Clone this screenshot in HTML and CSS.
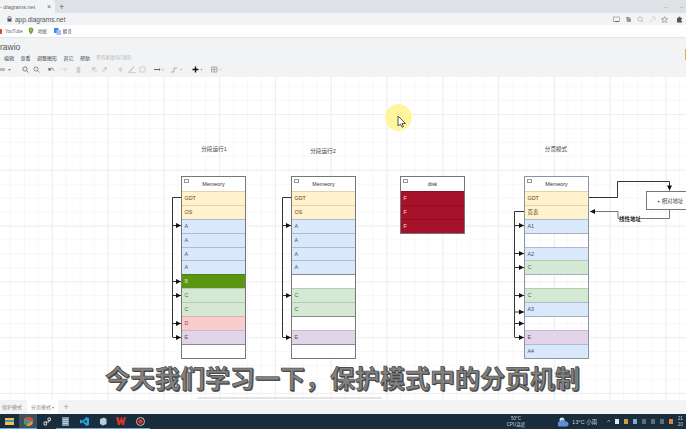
FILE: index.html
```html
<!DOCTYPE html>
<html lang="zh-CN">

<head>
    <meta charset="UTF-8">
    <meta name="viewport" content="width=device-width, initial-scale=1.0">
    <title>Drawio - diagrams.net</title>
    <link rel="stylesheet" href="styles.css">
</head>

<body>
    <div class="screen">
        <div class="tab-strip">
            <div class="browser-tab"><span>- diagrams.net</span><span class="tab-close">×</span></div>
            <span class="tab-new">+</span>
            <div class="window-btns"><span>–</span><span>–</span></div>
        </div>

        <div class="address-bar">
            <svg class="lock" width="5" height="6" viewBox="0 0 5 6"><path d="M1 3V2a1.5 1.5 0 0 1 3 0v1" fill="none" stroke="#555" stroke-width=".7"/><rect x=".5" y="2.6" width="4" height="3" fill="#555"/></svg>
            <span class="url">app.diagrams.net</span>
            <div class="addr-icons">
                <svg width="7" height="7" viewBox="0 0 7 7"><rect x=".5" y="1" width="6" height="4.5" fill="none" stroke="#999" stroke-width=".7"/><path d="M2 5.5h4" stroke="#666"/></svg>
                <svg width="7" height="7" viewBox="0 0 7 7"><path d="M1 1h3l2 2v3H2z" fill="#999"/></svg>
                <svg width="7" height="7" viewBox="0 0 7 7"><circle cx="3" cy="3" r="2.2" fill="none" stroke="#aaa" stroke-width=".7"/><path d="M4.5 4.5 6.5 6.500" stroke="#aaa" stroke-width=".7"/></svg>
                <svg width="7" height="7" viewBox="0 0 7 7"><path d="M1 6 6 1M3 1h3v3" fill="none" stroke="#ccc" stroke-width=".7"/></svg>
                <svg width="7" height="7" viewBox="0 0 7 7"><path d="M3.5.6 4.4 2.6 6.6 2.8 5 4.2 5.4 6.4 3.5 5.3 1.6 6.4 2 4.2.4 2.8 2.6 2.6z" fill="none" stroke="#888" stroke-width=".7"/></svg>
                <svg class="puzzle" width="7" height="7" viewBox="0 0 7 7"><path d="M1 2h1.5V.8h2V2H6v1.6H5v1.4h1v1.6H1z" fill="#555"/></svg>
            </div>
        </div>

        <div class="bookmarks">
            <span class="yt-dot"></span><span class="bm-text bm-yt">YouTube</span>
            <svg class="bm-icon" width="6" height="8" viewBox="0 0 6 8"><path d="M3 .5A2.4 2.4 0 0 0 .6 2.9C.6 4.6 3 7.5 3 7.5s2.4-2.9 2.4-4.6A2.4 2.4 0 0 0 3 .5z" fill="#6aa84f"/><circle cx="3" cy="2.9" r=".9" fill="#f4c20d"/></svg>
            <span class="bm-text bm-map">地图</span>
            <svg class="bm-icon bm-tr" width="7" height="7" viewBox="0 0 7 7"><rect width="4.5" height="5" fill="#4285f4"/><rect x="2.5" y="2" width="4.5" height="5" fill="#a4c2f4"/></svg>
            <span class="bm-text">翻译</span>
        </div>

        <div class="app-header">
            <div class="app-title">rawio</div>
            <div class="app-menu">
                <span>编辑</span><span>查看</span><span>调整图形</span><span>其它</span><span>帮助</span>
                <span class="saved">所有更改均已保存</span>
            </div>
            <div class="app-tools">
                <svg class="t-view" width="12" height="7" viewBox="0 0 12 7"><rect x="0" y="2" width="5" height="3" fill="#bbb"/><path d="M8 3h3L9.500 5z" fill="#888"/></svg>
                <svg class="t-zoom1" width="7" height="7" viewBox="0 0 7 7"><circle cx="3" cy="3" r="2.100" fill="none" stroke="#666" stroke-width=".8"/><path d="M4.500 4.500 6.500 6.500" stroke="#666" stroke-width=".8"/></svg>
                <svg class="t-zoom2" width="7" height="7" viewBox="0 0 7 7"><circle cx="3" cy="3" r="2.100" fill="none" stroke="#777" stroke-width=".8"/><path d="M4.500 4.500 6.500 6.500" stroke="#777" stroke-width=".8"/></svg>
                <svg class="t-undo" width="7" height="7" viewBox="0 0 7 7"><path d="M1 3.500C3 1.500 5 2 6 4.500" fill="none" stroke="#555" stroke-width=".8"/><path d="M.5 1.500v3h3z" fill="#555"/></svg>
                <svg class="t-redo" width="7" height="7" viewBox="0 0 7 7"><path d="M6 3.500C4 1.500 2 2 1 4.500" fill="none" stroke="#d4d4d4" stroke-width=".8"/><path d="M6.500 1.500v3h-3z" fill="#d4d4d4"/></svg>
                <svg class="t-trash" width="7" height="7" viewBox="0 0 7 7"><path d="M2 1.500h3V6.500H2zM1.500 1h4" fill="#d0d0d0" stroke="#c8c8c8" stroke-width=".5"/></svg>
                <svg class="t-front" width="7" height="7" viewBox="0 0 7 7"><rect x="1" y="1" width="3.500" height="3.500" fill="#d0d0d0"/><rect x="3" y="3" width="3" height="3" fill="#e2e2e2"/></svg>
                <svg class="t-back" width="7" height="7" viewBox="0 0 7 7"><rect x="3" y="1" width="3" height="3" fill="#d0d0d0"/><rect x="1" y="3" width="3" height="3" fill="#e2e2e2"/></svg>
                <svg class="t-fill" width="7" height="7" viewBox="0 0 7 7"><path d="M3.500 1 6 3.500 3.500 6 1 3.500z" fill="#d4d4d4"/></svg>
                <svg class="t-pen" width="8" height="7" viewBox="0 0 8 7"><path d="M1 6 6 1" stroke="#c8c8c8" stroke-width="1.200"/><path d="M0 6.600h8" stroke="#e8c0b8"/></svg>
                <svg class="t-rect" width="7" height="7" viewBox="0 0 7 7"><rect x="1" y="1" width="5" height="5" fill="none" stroke="#d0d0d0"/></svg>
                <svg class="t-line" width="10" height="7" viewBox="0 0 10 7"><path d="M0 3.500h5" stroke="#666"/><path d="M5 2v3l1.500-1.500z" fill="#666"/><path d="M8 3h2L9 4.500z" fill="#aaa"/></svg>
                <svg class="t-elbow" width="11" height="7" viewBox="0 0 11 7"><path d="M0 6h3V2h3" fill="none" stroke="#999" stroke-width=".8"/><path d="M9 3h2L10 4.500z" fill="#aaa"/></svg>
                <svg class="t-plus" width="11" height="7" viewBox="0 0 11 7"><path d="M3.500 .5v6M.5 3.500h6" stroke="#111" stroke-width="1.400"/><path d="M8.500 3h2L9.500 4.500z" fill="#888"/></svg>
                <svg class="t-table" width="11" height="7" viewBox="0 0 11 7"><path d="M.5 1h5.500v5H.5zM.5 3.500H6M3.200 1v5" fill="none" stroke="#999" stroke-width=".8"/><path d="M8.500 3h2L9.500 4.500z" fill="#bbb"/></svg>
            </div>
            <span class="format-toggle"></span>
        </div>

        <div class="canvas">
            <div class="pointer-glow"></div>
            <svg class="pointer" width="10" height="13" viewBox="0 0 10 13"><path d="M1 1v10l2.500-2 1.500 3.200 1.500-.7L5 8.500h3.500z" fill="#fff" stroke="#555"/></svg>

            <div class="label label-run1">分段运行1</div>
            <div class="label label-run2">分段运行2</div>
            <div class="label label-page">分页模式</div>

            <div class="swim col-run1">
                <div class="swim-head">Memeory</div>
                <div class="row yellow">GDT</div>
                <div class="row yellow">OS</div>
                <div class="row blue">A</div>
                <div class="row blue">A</div>
                <div class="row blue">A</div>
                <div class="row blue">A</div>
                <div class="row dark-green">B</div>
                <div class="row green">C</div>
                <div class="row green">C</div>
                <div class="row red">D</div>
                <div class="row purple">E</div>
                <div class="row"></div>
            </div>

            <div class="swim col-run2">
                <div class="swim-head">Memeory</div>
                <div class="row yellow">GDT</div>
                <div class="row yellow">OS</div>
                <div class="row blue">A</div>
                <div class="row blue">A</div>
                <div class="row blue">A</div>
                <div class="row blue">A</div>
                <div class="row"></div>
                <div class="row green">C</div>
                <div class="row green">C</div>
                <div class="row"></div>
                <div class="row purple">E</div>
                <div class="row"></div>
            </div>

            <div class="swim col-disk">
                <div class="swim-head">disk</div>
                <div class="row dark-red">F</div>
                <div class="row dark-red">F</div>
                <div class="row dark-red">F</div>
            </div>

            <div class="swim col-page">
                <div class="swim-head">Memeory</div>
                <div class="row yellow">GDT</div>
                <div class="row yellow">页表</div>
                <div class="row blue">A1</div>
                <div class="row clear"></div>
                <div class="row blue">A2</div>
                <div class="row green">C</div>
                <div class="row clear"></div>
                <div class="row green">C</div>
                <div class="row blue">A3</div>
                <div class="row clear"></div>
                <div class="row purple">E</div>
                <div class="row blue">A4</div>
            </div>

            <div class="offset-box">+ 相对地址</div>

            <!-- connectors, canvas coords (page y - 77) -->
            <svg class="wires" width="686" height="323" viewBox="0 0 686 323">
                <defs>
                    <marker id="head" markerWidth="6" markerHeight="6" refX="5.500" refY="3" orient="auto" markerUnits="userSpaceOnUse">
                        <path d="M.5 .5 5.500 3 .5 5.500z" fill="#111"/>
                    </marker>
                </defs>
                <g fill="none" stroke="#333" stroke-width="1">
                    <path d="M181 120.500H172.500V260"/>
                    <path d="M172.500 148.500H181" marker-end="url(#head)"/>
                    <path d="M172.500 204.500H181" marker-end="url(#head)"/>
                    <path d="M172.500 218.500H181" marker-end="url(#head)"/>
                    <path d="M172.500 246.500H181" marker-end="url(#head)"/>
                    <path d="M172.500 260.500H181" marker-end="url(#head)"/>

                    <path d="M291 120.500H282.500V260"/>
                    <path d="M282.500 148.500H291" marker-end="url(#head)"/>
                    <path d="M282.500 218.500H291" marker-end="url(#head)"/>
                    <path d="M282.500 260.500H291" marker-end="url(#head)"/>

                    <path d="M524 134.500H514.500V260"/>
                    <path d="M514.500 148.500H524" marker-end="url(#head)"/>
                    <path d="M514.500 176.500H524" marker-end="url(#head)"/>
                    <path d="M514.500 190.500H524" marker-end="url(#head)"/>
                    <path d="M514.500 218.500H524" marker-end="url(#head)"/>
                    <path d="M514.500 235H524" marker-end="url(#head)"/>
                    <path d="M514.500 246.500H524" marker-end="url(#head)"/>
                    <path d="M514.500 260.500H524" marker-end="url(#head)"/>

                    <path d="M589 120.500H617.500V104.500H669.500V113.500" marker-end="url(#head)"/>
                    <path d="M669.500 133V141.500H618V134.500H590" stroke="#777" marker-end="url(#head)"/>
                </g>
            </svg>

            <div class="edge-label">线性地址</div>
            <div class="scroll-thumb"></div>
            <div class="subtitle">今天我们学习一下，保护模式中的分页机制</div>
        </div>

        <div class="page-tabs">
            <span class="page-tab">保护模式</span>
            <span class="page-tab active">分页模式 <i>▾</i></span>
            <span class="page-add">+</span>
        </div>

        <div class="taskbar">
            <div class="task-apps">
                <div class="task-app open"><svg width="9" height="8" viewBox="0 0 9 8"><rect y="1" width="9" height="7" fill="#f2c04c"/><rect y="3" width="9" height="2" fill="#4a90c8"/></svg></div>
                <div class="task-app open active"><svg width="9" height="9" viewBox="0 0 9 9"><circle cx="4.500" cy="4.500" r="4.500" fill="#e0a030"/><path d="M4.500 4.500 9 4.500A4.500 4.500 0 0 0 1 1.700z" fill="#d04a3a"/><path d="M4.500 4.500 1 1.700A4.500 4.500 0 0 0 3 8.800z" fill="#4a9a50"/><circle cx="4.500" cy="4.500" r="1.900" fill="#4a85d0"/></svg></div>
                <div class="task-app"><svg width="8" height="9" viewBox="0 0 8 9"><path d="M5 1h2.500v2.500H5zM1 5h2.500v3H1zM6 3.500V5H2.500" fill="none" stroke="#c8ced2"/></svg></div>
                <div class="task-app open"><svg width="7" height="9" viewBox="0 0 7 9"><rect width="7" height="9" fill="#7f97ad"/><path d="M1 2.500h5M1 4.500h5M1 6.500h5" stroke="#dfe6ec" stroke-width=".7"/></svg></div>
                <div class="task-app open"><svg width="9" height="9" viewBox="0 0 9 9"><path d="M6.500 0 9 1.200v6.600L6.500 9 2.500 5.200.8 6.500 0 6V3l.8-.5 1.700 1.300zM6.500 2.700 4 4.500l2.500 1.800z" fill="#2f9fe0"/></svg></div>
                <div class="task-app open"><svg width="8" height="9" viewBox="0 0 8 9"><path d="M1 2 5 .5 7.500 2v5L4 8.500 1 7z" fill="#b9ccd8"/></svg></div>
                <div class="task-app open"><svg width="10" height="8" viewBox="0 0 10 8"><path d="M0 0h2.500L3.800 4 5 0h.8L7 4l.8-4H10L8 8H6L5 5 4 8H2z" fill="#d8352a"/></svg></div>
                <div class="task-app open"><svg width="9" height="9" viewBox="0 0 9 9"><circle cx="4.500" cy="4.500" r="4" fill="#1c2c3a" stroke="#e8b0a8"/><circle cx="4.500" cy="4.500" r="2.200" fill="#e03a30"/></svg></div>
            </div>
            <div class="task-tray">
                <div class="cpu-temp"><span>50°C</span><span>CPU温度</span></div>
                <svg class="weather" width="11" height="10" viewBox="0 0 11 10"><circle cx="4" cy="3" r="2.500" fill="#d8dfe6"/><path d="M1.500 9.500a2.500 2.500 0 0 1 .5-5 3 3 0 0 1 5.500 0 2.500 2.500 0 0 1 1 5z" fill="#5f8fd8"/></svg>
                <span class="weather-text">13°C 小雨</span>
                <div class="tray-icons">
                    <span class="caret">^</span>
                    <i class="ti ti-white"></i><i class="ti ti-gold"></i><i class="ti ti-blue"></i>
                    <i class="ti ti-dim"></i><i class="ti ti-dim"></i><i class="ti ti-dim"></i>
                    <i class="ti ti-orange"></i>
                </div>
                <div class="clock"><span>21</span><span>20</span></div>
            </div>
        </div>
    </div>
</body>

</html>
```

FILE: styles.css
```css
html, body {
    margin: 0;
    padding: 0;
    overflow: hidden;
}

body {
    font-family: "Liberation Sans", "Noto Sans CJK SC", sans-serif;
    color: #333;
}

.screen {
    width: 686px;
    height: 429px;
    display: flex;
    flex-direction: column;
    overflow: hidden;
    filter: blur(0.4px);
}

/* browser chrome */
.tab-strip {
    height: 13px;
    background-color: #dee1e6;
    display: flex;
    align-items: center;
    flex-shrink: 0;
}

.browser-tab {
    width: 55px;
    height: 13px;
    background-color: #f1f3f4;
    border-radius: 0 4px 0 0;
    display: flex;
    justify-content: space-between;
    align-items: center;
    font-size: 5.5px;
    color: #666;
    padding-right: 4px;
    box-sizing: border-box;
}

.tab-close {
    font-size: 7px;
}

.tab-new {
    margin-left: 4px;
    font-size: 9px;
    color: #666;
}

.window-btns {
    margin-left: auto;
    display: flex;
    gap: 12px;
    padding-right: 3px;
    font-size: 6px;
    color: #999;
}

.address-bar {
    height: 12px;
    background-color: #f1f3f4;
    display: flex;
    align-items: center;
    padding-left: 7px;
    flex-shrink: 0;
}

.url {
    margin-left: 3px;
    font-size: 6.5px;
    color: #555;
}

.addr-icons {
    margin-left: auto;
    display: flex;
    align-items: center;
    gap: 5px;
    padding-right: 3px;
}

.puzzle {
    margin-left: 3px;
}

.bookmarks {
    height: 13px;
    background-color: #fff;
    border-bottom: 1px solid #e4e6e8;
    box-sizing: border-box;
    display: flex;
    align-items: center;
    flex-shrink: 0;
}

.yt-dot {
    width: 3px;
    height: 5px;
    margin-left: -1px;
    border-radius: 1px;
    background-color: #e0452f;
}

.bm-text {
    font-size: 4.5px;
    color: #666;
    margin-left: 2px;
}

.bm-yt {
    margin-left: 3px;
    margin-right: 5px;
}

.bm-map {
    margin-left: 4px;
}

.bm-tr {
    margin-left: 7px;
}

/* draw.io header */
.app-header {
    height: 39px;
    background-color: #f1f3f4;
    position: relative;
    flex-shrink: 0;
}

.app-title {
    padding-top: 3px;
    height: 10px;
    font-size: 8.5px;
    line-height: 12px;
    color: #555;
}

.app-menu {
    display: flex;
    align-items: center;
    height: 12px;
    padding-left: 4px;
    font-size: 5px;
    color: #444;
}

.app-menu span {
    margin-right: 6.500px;
}

.app-menu .saved {
    font-size: 4.400px;
    color: #b4b4b4;
}

.app-tools {
    display: flex;
    align-items: center;
    height: 13px;
}

.app-tools svg {
    flex-shrink: 0;
}

.t-view { margin-left: 0; }
.t-zoom1 { margin-left: 10px; }
.t-zoom2 { margin-left: 4px; }
.t-undo { margin-left: 8px; }
.t-redo { margin-left: 5px; }
.t-trash { margin-left: 8px; }
.t-front { margin-left: 9px; }
.t-back { margin-left: 3px; }
.t-fill { margin-left: 9px; }
.t-pen { margin-left: 4px; }
.t-rect { margin-left: 3px; }
.t-line { margin-left: 8px; }
.t-elbow { margin-left: 7px; }
.t-plus { margin-left: 10px; }
.t-table { margin-left: 8px; }

.format-toggle {
    position: absolute;
    right: 0;
    top: 11px;
    width: 1px;
    height: 11px;
    background-color: #f0a64a;
}

/* diagram area */
.canvas {
    flex: 1;
    position: relative;
    overflow: hidden;
    background-color: #fff;
    background-image:
        linear-gradient(to right, #efefef 1px, transparent 1px),
        linear-gradient(to bottom, #efefef 1px, transparent 1px),
        linear-gradient(to right, #f7f7f7 1px, transparent 1px),
        linear-gradient(to bottom, #f7f7f7 1px, transparent 1px);
    background-size: 55.8px 55.8px, 55.8px 55.8px, 13.95px 13.95px, 13.95px 13.95px;
    background-position: -4px 37px, -4px 37px, -4px 37px, -4px 37px;
}

.pointer-glow {
    position: absolute;
    left: 385px;
    top: 27px;
    width: 27px;
    height: 27px;
    border-radius: 50%;
    background: radial-gradient(circle, #fff59c 65%, rgba(255, 246, 160, 0) 100%);
}

.pointer {
    position: absolute;
    left: 397px;
    top: 38px;
}

.label {
    position: absolute;
    font-size: 5.6px;
    color: #444;
    white-space: nowrap;
    transform: translateX(-50%);
}

.label-run1 { left: 214px; top: 68px; }
.label-run2 { left: 323px; top: 70px; }
.label-page { left: 556px; top: 68px; }

.swim {
    position: absolute;
    width: 65px;
    top: 99px;
    border: 1px solid #777;
    box-sizing: border-box;
    font-size: 5.4px;
}

.col-run1 { left: 181px; }
.col-run2 { left: 291px; }
.col-disk { left: 400px; }
.col-page { left: 524px; border-color: #8a94a4; }

.swim-head {
    height: 14px;
    line-height: 14px;
    text-align: center;
    background-color: #fff;
    position: relative;
    color: #333;
}

.swim-head::before {
    content: "";
    position: absolute;
    left: 2px;
    top: 2px;
    width: 3px;
    height: 2px;
    border: 1px solid #999;
}

.row {
    height: 13.9px;
    line-height: 13.5px;
    padding-left: 2.500px;
    box-sizing: border-box;
    background-color: #fff;
    border-top: 1px solid #8a8a8a;
}

.clear {
    background-color: transparent;
    border-top-color: #a8b0bc;
}

.yellow { background-color: #fff2cc; border-color: #e6d3a0; color: #5a4a20; }
.blue { background-color: #dae8fc; border-color: #a8bcd8; color: #3c5070; }
.green { background-color: #d5e8d4; border-color: #b4ccb0; color: #4a6a48; }
.red { background-color: #f8cecc; border-color: #e0b0ae; color: #8a4a48; }
.purple { background-color: #e1d5e7; border-color: #c8b8d0; color: #5a4a68; }
.dark-green { background-color: #5a9612; border-color: #4c8010; color: #cfe8b0; }
.dark-red { background-color: #a8112a; border-color: #8e0e22; color: #fbe0e0; }

.offset-box {
    position: absolute;
    left: 646px;
    top: 113.500px;
    width: 50px;
    height: 19px;
    line-height: 18px;
    box-sizing: border-box;
    border: 1px solid #777;
    background-color: #fff;
    padding-left: 10px;
    font-size: 5.4px;
    color: #444;
}

.edge-label {
    position: absolute;
    left: 619px;
    top: 138px;
    font-size: 5.500px;
    font-weight: bold;
    color: #222;
    background-color: #fff;
}

.wires {
    position: absolute;
    left: 0;
    top: 0;
}

.scroll-thumb {
    position: absolute;
    left: 197px;
    bottom: 1px;
    width: 185px;
    height: 2px;
    background-color: #e4e4e4;
}

.subtitle {
    position: absolute;
    left: 105px;
    top: 283px;
    font-family: "Noto Sans CJK SC", sans-serif;
    font-size: 25px;
    line-height: 34px;
    font-weight: 700;
    white-space: nowrap;
    color: #828282;
    -webkit-text-stroke: 0.6px #3a3a3a;
    text-shadow: 1px 1px 0 #555;
}

/* diagram page tabs */
.page-tabs {
    height: 14px;
    background-color: #f1f3f4;
    display: flex;
    align-items: center;
    font-size: 5px;
    color: #888;
    flex-shrink: 0;
}

.page-tab {
    padding: 0 2px;
    height: 14px;
    line-height: 14px;
}

.page-tab.active {
    margin-left: 3px;
    padding: 0 4px;
    background-color: #fff;
}

.page-tab i {
    font-style: normal;
    font-size: 3.500px;
}

.page-add {
    margin-left: 5px;
    font-size: 9px;
    color: #999;
}

/* windows taskbar */
.taskbar {
    height: 15px;
    background-color: #1a2d3c;
    display: flex;
    align-items: stretch;
    flex-shrink: 0;
}

.task-apps {
    display: flex;
}

.task-app {
    width: 18.700px;
    display: flex;
    justify-content: center;
    align-items: center;
    box-sizing: border-box;
    border-bottom: 1px solid transparent;
}

.task-app.open {
    border-bottom-color: #6ea8d8;
}

.task-app.active {
    background-color: #3c5060;
}

.task-tray {
    margin-left: auto;
    display: flex;
    align-items: center;
    color: #c8d0d6;
    font-size: 4.500px;
}

.cpu-temp {
    display: flex;
    flex-direction: column;
    align-items: center;
    line-height: 6px;
    margin-right: 33px;
}

.weather-text {
    margin-left: 3px;
    margin-right: 10px;
    font-size: 5.500px;
}

.tray-icons {
    display: flex;
    align-items: center;
    gap: 5px;
}

.caret {
    font-size: 6px;
}

.ti {
    width: 4px;
    height: 5px;
    display: block;
}

.ti-white { background-color: #dfe6ec; }
.ti-gold { background-color: #c8a040; }
.ti-blue { background-color: #7fa8d8; }
.ti-dim { background-color: #5c6c78; }
.ti-orange { background-color: #e0803a; }

.clock {
    width: 8px;
    margin-left: 5px;
    display: flex;
    flex-direction: column;
    line-height: 6px;
    overflow: hidden;
    white-space: nowrap;
}
```
